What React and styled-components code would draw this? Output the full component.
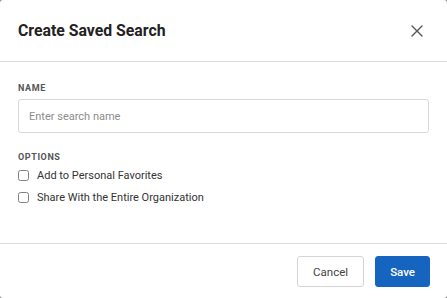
import React from 'react';
import styled, { createGlobalStyle } from 'styled-components';

const GlobalStyle = createGlobalStyle`
  html, body {
    margin: 0;
    padding: 0;
    background: #8a8a8a;
    font-family: Roboto, "Liberation Sans", Arial, sans-serif;
  }
  * { box-sizing: border-box; }
`

const Modal = styled.div`
  width: 447px;
  height: 298px;
  background: #fff;
  border-radius: 3px;
  display: flex;
  flex-direction: column;
  overflow: hidden;
`

const Header = styled.div`
  height: 62px;
  padding: 0 18px;
  display: flex;
  align-items: center;
  justify-content: space-between;
  border-bottom: 1px solid #dcdcdc;
`

const Title = styled.h2`
  margin: 0;
  font-size: 15.8px;
  font-weight: 700;
  color: #222;
`

const CloseButton = styled.button`
  border: none;
  background: none;
  padding: 0;
  width: 14px;
  height: 14px;
  margin-right: 5px;
  display: flex;
  align-items: center;
  justify-content: center;
  cursor: pointer;
`

const Body = styled.div`
  flex: 1;
  padding: 20px 18px 0;
`

const SectionLabel = styled.div`
  font-size: 9px;
  line-height: 12px;
  font-weight: 700;
  letter-spacing: 0.6px;
  color: #555;
  text-transform: uppercase;
  margin-top: ${p => p.$top || 0}px;
`

const TextInput = styled.input`
  display: block;
  width: 100%;
  height: 34px;
  margin-top: 5px;
  padding: 0 10px;
  border: 1px solid #d9d9d9;
  border-radius: 3px;
  font-family: inherit;
  font-size: 11px;
  color: #333;
  outline: none;
  &::placeholder { color: #8c8c8c; }
`

const CheckRow = styled.label`
  display: flex;
  align-items: center;
  height: 22px;
  font-size: 11px;
  color: #333;
  cursor: pointer;
  &:first-of-type { margin-top: 1px; }
`

const Box = styled.span`
  width: 11px;
  height: 11px;
  border: 1px solid #808080;
  border-radius: 2.5px;
  margin-right: 8px;
  flex-shrink: 0;
`

const Footer = styled.div`
  height: 55px;
  border-top: 1px solid #dcdcdc;
  padding: 0 17px 0 0;
  display: flex;
  align-items: center;
  justify-content: flex-end;
  gap: 11px;
`

const Button = styled.button`
  height: 31px;
  padding: 0 ${p => p.$primary ? 14 : 15}px;
  border-radius: 3px;
  font-family: inherit;
  font-size: 11.5px;
  font-weight: ${p => p.$primary ? 500 : 400};
  border: 1px solid ${p => p.$primary ? '#1565c0' : '#d4d4d4'};
  background: ${p => p.$primary ? '#1565c0' : '#fff'};
  color: ${p => p.$primary ? '#fff' : '#444'};
  cursor: pointer;
  margin-top: 1px;
`

const options = ['Add to Personal Favorites', 'Share With the Entire Organization'];

export default function App() {
  return (
    <>
      <GlobalStyle />
      <Modal>
        <Header>
          <Title>Create Saved Search</Title>
          <CloseButton aria-label="Close">
            <svg width="12" height="12" viewBox="0 0 12 12">
              <path d="M1 1 L11 11 M11 1 L1 11" stroke="#555" strokeWidth="1.4" strokeLinecap="round" />
            </svg>
          </CloseButton>
        </Header>
        <Body>
          <SectionLabel>Name</SectionLabel>
          <TextInput placeholder="Enter search name" />
          <SectionLabel $top={18}>Options</SectionLabel>
          {options.map(o => (
            <CheckRow key={o}>
              <Box />
              {o}
            </CheckRow>
          ))}
        </Body>
        <Footer>
          <Button>Cancel</Button>
          <Button $primary>Save</Button>
        </Footer>
      </Modal>
    </>
  );
}
